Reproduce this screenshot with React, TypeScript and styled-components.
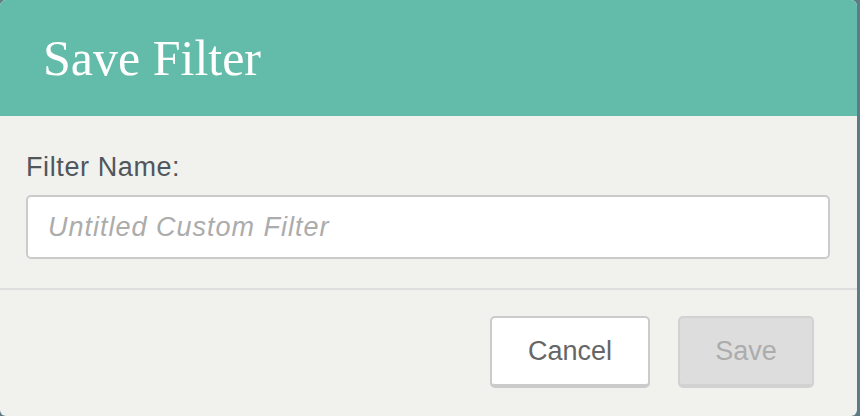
import React from 'react';
import styled, { createGlobalStyle } from 'styled-components';

const GlobalStyle = createGlobalStyle`
  html, body {
    margin: 0;
    padding: 0;
    background: #5f7b86;
  }
  * {
    box-sizing: border-box;
  }
`;

const sans = `'Liberation Sans', Arial, sans-serif`;

const Modal = styled.div`
  width: 857px;
  height: 416px;
  background: #f1f1ed;
  border-radius: 6px;
  overflow: hidden;
  display: flex;
  flex-direction: column;
`;

const Header = styled.header`
  height: 116px;
  background: #63bca9;
  display: flex;
  align-items: center;
  padding-left: 43px;
`;

const Title = styled.h1`
  margin: 0;
  font-family: 'Liberation Serif', serif;
  font-weight: normal;
  font-size: 50px;
  color: #ffffff;
  line-height: 1;
`;

const Body = styled.div`
  padding: 35px 26px 29px 26px;
  border-bottom: 2px solid #dedede;
`;

const Label = styled.label`
  display: block;
  font-family: ${sans};
  font-size: 27px;
  letter-spacing: 0.6px;
  line-height: 32px;
  color: #50575c;
  margin-bottom: 12px;
`;

const TextInput = styled.input`
  display: block;
  width: 804px;
  height: 64px;
  padding: 0 20px;
  border: 2px solid #cbcbcb;
  border-radius: 5px;
  background: #ffffff;
  font-family: ${sans};
  font-size: 27px;
  letter-spacing: 1px;
  color: #444;
  outline: none;

  &::placeholder {
    color: #acacac;
    font-style: italic;
  }
`;

const Footer = styled.div`
  flex: 1;
  display: flex;
  justify-content: flex-end;
  align-items: flex-start;
  gap: 28px;
  padding: 26px 43px 0 0;
`;

const Button = styled.button<{ $disabled?: boolean; $width: number }>`
  width: ${(p) => p.$width}px;
  height: 72px;
  padding: 0;
  border: 2px solid ${(p) => (p.$disabled ? '#d2d2d2' : '#cbcbcb')};
  border-bottom-width: 4px;
  border-radius: 5px;
  background: ${(p) => (p.$disabled ? '#dddddd' : '#ffffff')};
  color: ${(p) => (p.$disabled ? '#acacac' : '#666666')};
  font-family: ${sans};
  font-size: 27px;
  cursor: ${(p) => (p.$disabled ? 'default' : 'pointer')};
`;

export default function App(): React.ReactElement {
  return (
    <>
      <GlobalStyle />
      <Modal>
        <Header>
          <Title>Save Filter</Title>
        </Header>
        <Body>
          <Label htmlFor='filter-name'>Filter Name:</Label>
          <TextInput id='filter-name' placeholder='Untitled Custom Filter' />
        </Body>
        <Footer>
          <Button $width={160}>Cancel</Button>
          <Button $disabled $width={136}>Save</Button>
        </Footer>
      </Modal>
    </>
  );
}
